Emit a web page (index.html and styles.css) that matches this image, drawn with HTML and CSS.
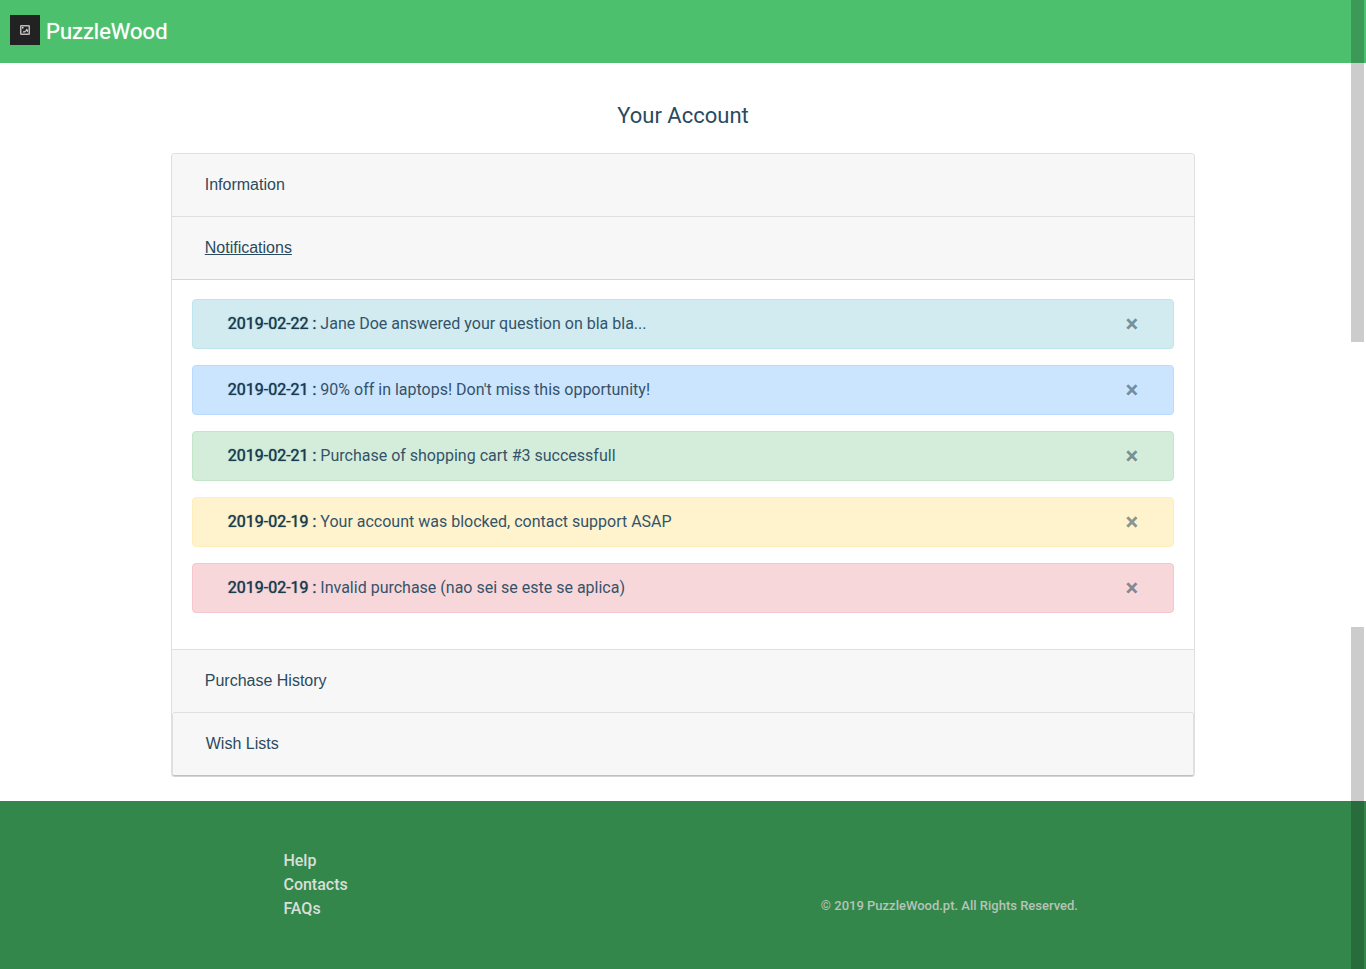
FILE: index.html
```html
<!DOCTYPE html>
<html lang="en">
<head>
<meta charset="utf-8">
<meta name="viewport" content="width=device-width, initial-scale=1">
<title>PuzzleWood - Your Account</title>
<link rel="stylesheet" href="styles.css">
</head>
<body>
<header class="topbar">
  <a class="brand" href="#">
    <svg class="logo" viewBox="0 0 30 30" aria-hidden="true">
      <rect width="30" height="30" fill="#222"/>
      <rect x="10.75" y="10.75" width="8.5" height="8.500" rx=".5" fill="none" stroke="#bbb" stroke-width="1.500"/>
      <rect x="12" y="12" width="1.500" height="1.500" fill="#ddd"/>
      <path d="M12.500 17.500l1.500-2 1 1 1.500-3 1.500 1.500v2.500l-1.500-1.500-1.500 1.500z" fill="#ccc"/>
    </svg>
    <span>PuzzleWood</span>
  </a>
</header>
<main class="account">
  <h1 class="title">Your Account</h1>
  <div class="accordion">
    <section class="card"><h2 class="card-header"><button type="button" class="toggle">Information</button></h2></section>
    <section class="card">
      <h2 class="card-header"><button type="button" class="toggle toggle-open" aria-expanded="true">Notifications</button></h2>
      <div class="card-body">
        <div class="alert info"><p><strong>2019-02-22 :</strong> Jane Doe answered your question on bla bla...</p><button type="button" class="close" aria-label="Close">×</button></div>
        <div class="alert primary"><p><strong>2019-02-21 :</strong> 90% off in laptops! Don't miss this opportunity!</p><button type="button" class="close" aria-label="Close">×</button></div>
        <div class="alert success"><p><strong>2019-02-21 :</strong> Purchase of shopping cart #3 successfull</p><button type="button" class="close" aria-label="Close">×</button></div>
        <div class="alert warning"><p><strong>2019-02-19 :</strong> Your account was blocked, contact support ASAP</p><button type="button" class="close" aria-label="Close">×</button></div>
        <div class="alert danger"><p><strong>2019-02-19 :</strong> Invalid purchase (nao sei se este se aplica)</p><button type="button" class="close" aria-label="Close">×</button></div>
      </div>
    </section>
    <section class="card"><h2 class="card-header"><button type="button" class="toggle">Purchase History</button></h2></section>
    <section class="card card-last"><h2 class="card-header"><button type="button" class="toggle">Wish Lists</button></h2></section>
  </div>
</main>
<footer class="footer">
  <nav class="links">
    <a href="#">Help</a>
    <a href="#">Contacts</a>
    <a href="#">FAQs</a>
  </nav>
  <p class="copyright">© 2019 PuzzleWood.pt. All Rights Reserved.</p>
</footer>
<div class="track" aria-hidden="true"><span class="thumb"></span><span class="thumb"></span></div>
</body>
</html>
```
FILE: styles.css
```css
* { box-sizing: border-box; }

body {
  margin: 0;
  min-height: 100vh;
  display: flex;
  flex-direction: column;
  background: #fff;
  color: #183b50;
  font: 400 16px/24px Roboto, sans-serif;
}

h1, h2, p { margin: 0; }
button { font: inherit; color: inherit; cursor: pointer; }
a { color: inherit; text-decoration: none; }

.topbar { background: #4dc06d; padding: 14px 10px; }
.brand {
  display: inline-flex;
  align-items: center;
  gap: 6px;
  color: #fff;
  font-size: 22px;
  line-height: 35px;
  vertical-align: top;
  text-shadow: 0 0 1px rgba(255, 255, 255, 0.6);
}
.logo { width: 30px; height: 30px; margin-bottom: 4px; }

.account { width: 75%; margin: 0 auto; padding: 36px 0 25px; }
.title {
  margin-bottom: 20px;
  color: #2a4a5e;
  font-size: 22px;
  font-weight: 400;
  line-height: 34px;
  text-align: center;
}

.accordion {
  border: 1px solid #dfdfdf;
  border-bottom-color: #bfbfbf;
  border-radius: 4px;
  box-shadow: 0 1px 0 #d4d4d4;
}
.card-header { padding: 12px 20px; background: #f7f7f7; font-size: 16px; font-weight: 400; }
.card:first-child .card-header { border-radius: 3px 3px 0 0; }
.card + .card { border-top: 1px solid #dfdfdf; }
.card-last {
  border-left: 1px solid #dfdfdf;
  border-right: 1px solid #dfdfdf;
  border-radius: 3px;
}
.card-last .card-header { border-radius: 3px; }
.toggle {
  display: block;
  padding: 7px 13px;
  border: 0;
  background: none;
  color: #2c4a5d;
  font: 400 16px/24px "Liberation Sans", Arial, sans-serif;
}
.toggle-open { text-decoration: underline; }
.card-body { padding: 19px 20px 20px; border-top: 1px solid #d6d6d6; }

.alert {
  display: flex;
  justify-content: space-between;
  align-items: center;
  margin-bottom: 16px;
  padding: 12px 35px;
  border: 1px solid;
  border-radius: 4px;
}
.alert p { color: #34536a; }
.alert strong {
  color: #183b50;
  font-weight: 400;
  text-shadow: 0 0 1px #183b50;
}
.info { background: #d1ebf0; border-color: #bee5eb; }
.primary { background: #cce5ff; border-color: #b8daff; }
.success { background: #d4edda; border-color: #c3e6cb; }
.warning { background: #fff3cd; border-color: #ffeeba; }
.danger { background: #f8d7da; border-color: #f5c6cb; }
.close {
  padding: 0;
  border: 0;
  background: none;
  font-size: 24px;
  font-weight: 700;
  line-height: 24px;
  text-shadow: 0 1px 0 #fff;
  opacity: 0.5;
}

.footer {
  flex: 1;
  display: grid;
  grid-template-columns: 1fr 1fr;
  align-items: end;
  padding: 48px 11%;
  background: #34874b;
}
.links {
  display: flex;
  flex-direction: column;
  align-items: flex-start;
  padding-left: 25%;
  color: #d8dfd9;
  font-weight: 500;
}
.copyright {
  padding-bottom: 3px;
  color: #b5c4b8;
  font-size: 13px;
  font-weight: 500;
  text-align: center;
}

.track {
  position: fixed;
  top: 0;
  right: 2px;
  bottom: 0;
  width: 13px;
  display: flex;
  flex-direction: column;
  justify-content: space-between;
  pointer-events: none;
}
.thumb { height: 342px; background: rgba(0, 0, 0, 0.2); }
```
